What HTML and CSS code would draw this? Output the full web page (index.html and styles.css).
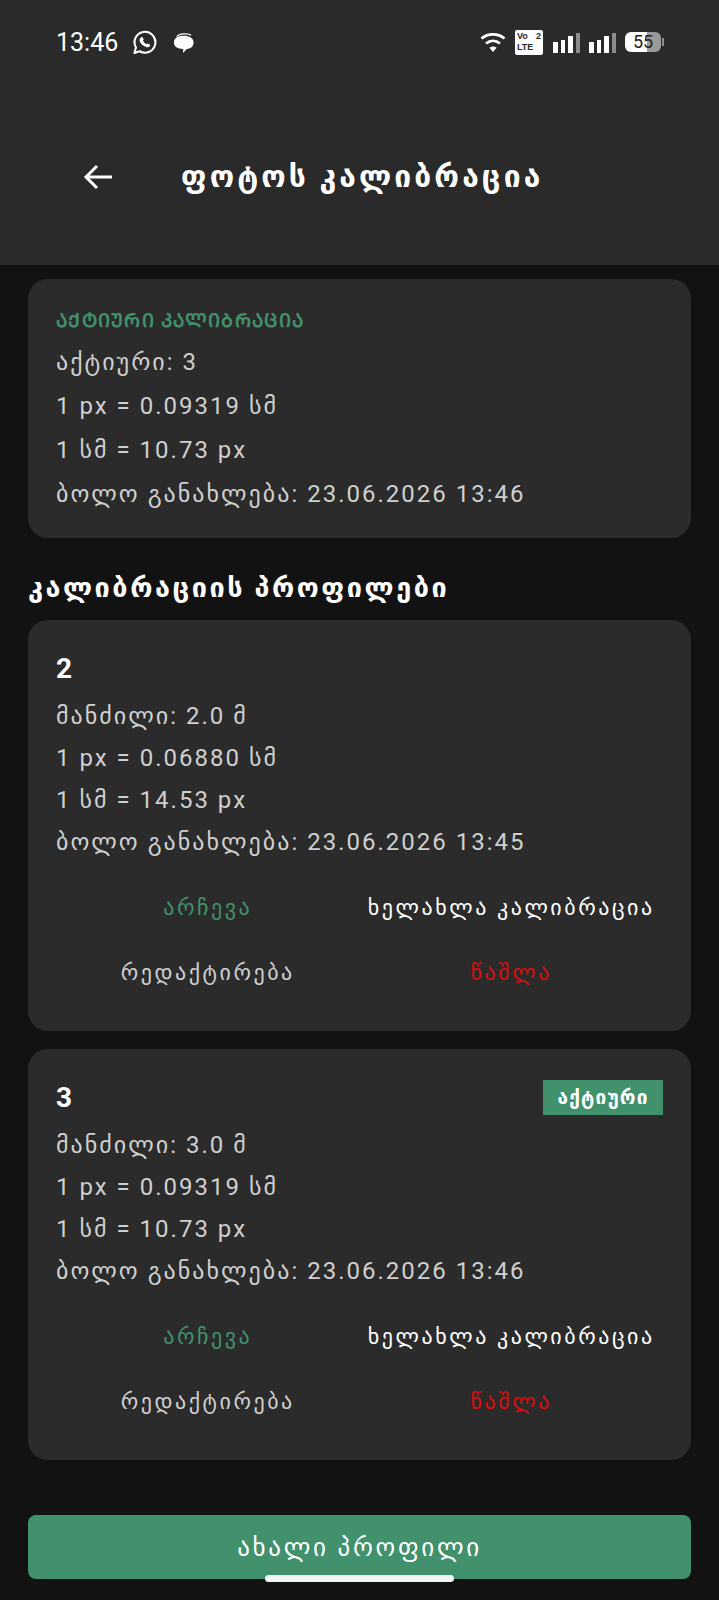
FILE: index.html
```html
<!DOCTYPE html>
<html>
<head>
    <title>ფოტოს კალიბრაცია</title>
    <link rel="stylesheet" href="styles.css">
</head>
<body>
    <header class="app-header">
        <div class="status-bar">
            <span class="time">13:46</span>
            <svg class="icon-whatsapp" viewBox="0 0 24 24" fill="none" stroke="#fff" stroke-width="2">
                <path d="M2.300 22 3.800 16.800A10 10 0 1 1 7.400 20.400Z" stroke-linejoin="round"/>
                <path d="M8.600 7.200c.8-.8 1.600-.5 2 .4l.5 1.200c.1.4 0 .8-.6 1.500.8 1.500 2 2.700 3.500 3.400.7-.7 1.100-.8 1.500-.6l1.200.6c.8.4 1 1.200.3 2-1.200 1.300-3 1-5.400-.4-2.300-1.400-3.800-3.300-4.300-5.100-.2-1.100.3-2.100 1.300-3Z" fill="#fff" stroke="none"/>
            </svg>
            <svg class="icon-chat" viewBox="0 0 24 24">
                <path d="M5 6C7 2.500 17 2 20 4.500" fill="none" stroke="#fff" stroke-width="1.300"/>
                <path d="M12 5c6 0 10.500 2.500 10.500 7s-3.500 6.500-7 6.800L11.500 23l.2-4.200C6 18.500 2 16.500 2 12s4-7 10-7Z" fill="#fff"/>
            </svg>
            <div class="status-right">
                <svg class="icon-wifi" viewBox="0 0 26 20" fill="none" stroke="#fff" stroke-width="2.800">
                    <path d="M1.500 6.500C8 1 18 1 24.500 6.500"/>
                    <path d="M6 11.500c4.200-3.500 9.800-3.500 14 0"/>
                    <path d="M13 20l-3.600-4.200c2-1.600 5.200-1.600 7.200 0Z" fill="#fff" stroke="none"/>
                </svg>
                <div class="volte">
                    <span class="volte-row"><span>Vo</span><span>2</span></span>
                    <span class="volte-row">LTE</span>
                </div>
                <div class="signal">
                    <i class="bar bar-1"></i><i class="bar bar-2"></i><i class="bar bar-3"></i><i class="bar bar-4"></i>
                </div>
                <div class="signal">
                    <i class="bar bar-1"></i><i class="bar bar-2"></i><i class="bar bar-3"></i><i class="bar bar-4"></i>
                </div>
                <div class="battery"><span class="battery-level">55</span><i class="battery-cap"></i></div>
            </div>
        </div>
        <div class="toolbar">
            <svg class="icon-back" viewBox="0 0 30 26" fill="none" stroke="#fff" stroke-width="3">
                <path d="M29 13H3"/>
                <path d="M14 2 3 13l11 11"/>
            </svg>
            <h1>ფოტოს კალიბრაცია</h1>
        </div>
    </header>

    <main class="content">
        <section class="card card-active">
            <div class="active-title">ᲐᲥᲢᲘᲣᲠᲘ ᲙᲐᲚᲘᲑᲠᲐᲪᲘᲐ</div>
            <div class="line">აქტიური: 3</div>
            <div class="line">1 px = 0.09319 სმ</div>
            <div class="line">1 სმ = 10.73 px</div>
            <div class="line">ბოლო განახლება: 23.06.2026 13:46</div>
        </section>

        <h2>კალიბრაციის პროფილები</h2>

        <section class="card profile">
            <div class="profile-head">
                <span class="profile-name">2</span>
            </div>
            <div class="line">მანძილი: 2.0 მ</div>
            <div class="line">1 px = 0.06880 სმ</div>
            <div class="line">1 სმ = 14.53 px</div>
            <div class="line">ბოლო განახლება: 23.06.2026 13:45</div>
            <div class="actions">
                <span class="action action-select">არჩევა</span>
                <span class="action action-white">ხელახლა კალიბრაცია</span>
                <span class="action">რედაქტირება</span>
                <span class="action action-delete">წაშლა</span>
            </div>
        </section>

        <section class="card profile">
            <div class="profile-head">
                <span class="profile-name">3</span>
                <span class="badge">აქტიური</span>
            </div>
            <div class="line">მანძილი: 3.0 მ</div>
            <div class="line">1 px = 0.09319 სმ</div>
            <div class="line">1 სმ = 10.73 px</div>
            <div class="line">ბოლო განახლება: 23.06.2026 13:46</div>
            <div class="actions">
                <span class="action action-select">არჩევა</span>
                <span class="action action-white">ხელახლა კალიბრაცია</span>
                <span class="action">რედაქტირება</span>
                <span class="action action-delete">წაშლა</span>
            </div>
        </section>

        <button class="new-profile">ახალი პროფილი</button>
    </main>

    <div class="home-indicator"></div>
</body>
</html>
```

FILE: styles.css
```css
* {
    box-sizing: border-box;
}
html, body {
    height: 1600px;
    overflow: hidden;
}
body {
    font-family: Roboto, "DejaVu Sans", sans-serif;
    background-color: #121212;
    color: #cfcfcf;
    margin: 0;
    padding: 0;
    position: relative;
}

/* header */
.app-header {
    background-color: #2a2a2a;
    height: 265px;
    padding: 29px 56px 0;
}
.status-bar {
    display: flex;
    align-items: center;
    height: 26px;
    color: #fff;
}
.time {
    font-size: 25px;
    width: 63px;
    margin-right: 13px;
}
.icon-whatsapp {
    width: 25px;
    height: 25px;
    margin-right: 15px;
}
.icon-chat {
    width: 23px;
    height: 23px;
}
.status-right {
    display: flex;
    align-items: center;
    margin-left: auto;
}
.icon-wifi {
    width: 26px;
    height: 20px;
    margin-right: 9px;
}
.volte {
    width: 28px;
    height: 25px;
    background-color: #fff;
    border-radius: 2px;
    color: #2a2a2a;
    font-family: "Liberation Sans", sans-serif;
    font-size: 9px;
    font-weight: bold;
    line-height: 11px;
    padding: 1px 2px;
    margin-right: 10px;
}
.volte-row {
    display: flex;
    justify-content: space-between;
}
.signal {
    display: flex;
    align-items: flex-end;
    gap: 3px;
    height: 21px;
    margin-right: 9px;
}
.bar {
    display: block;
    width: 4.500px;
    background-color: #fff;
}
.bar-1 { height: 11px; }
.bar-2 { height: 13px; }
.bar-3 { height: 17px; }
.bar-4 { height: 20px; background-color: #8c8c8c; }
.battery {
    position: relative;
    display: flex;
    align-items: center;
    width: 36px;
    height: 20px;
    border-radius: 6px;
    margin-right: 2px;
    background: linear-gradient(to right, #fff 60%, #9a9a9a 60%);
}
.battery-level {
    width: 100%;
    text-align: center;
    color: #222;
    font-size: 18px;
    line-height: 20px;
}
.battery-cap {
    position: absolute;
    right: -3px;
    top: 6px;
    width: 2px;
    height: 8px;
    background-color: #8c8c8c;
}
.toolbar {
    display: flex;
    align-items: center;
    margin-top: 104px;
    padding-left: 27px;
}
.icon-back {
    width: 30px;
    height: 26px;
    margin-right: 68px;
}
h1 {
    margin: 0;
    font-size: 30px;
    letter-spacing: 3.100px;
    font-weight: bold;
    color: #fff;
}

/* content */
.content {
    padding: 14px 28px 0;
}
.card {
    background-color: #2b2b2b;
    border-radius: 20px;
    padding: 21px 28px 0;
}
.card-active {
    height: 259px;
    padding-top: 23px;
}
.active-title {
    color: #41916c;
    font-size: 19px;
    letter-spacing: 1.300px;
    font-weight: bold;
    line-height: 38px;
}
.card-active .line {
    line-height: 44px;
}
.line {
    font-size: 24px;
    letter-spacing: 2px;
    line-height: 42px;
    white-space: nowrap;
}
h2 {
    margin: 30px 0 12px;
    font-size: 27px;
    letter-spacing: 2.550px;
    line-height: 40px;
    font-weight: bold;
    color: #fff;
}
.profile {
    height: 411px;
    margin-bottom: 18px;
}
.profile-head {
    display: flex;
    justify-content: space-between;
    align-items: center;
    height: 54px;
}
.profile-name {
    font-size: 28px;
    font-weight: bold;
    color: #fff;
}
.badge {
    background-color: #41916c;
    color: #fff;
    font-size: 19px;
    letter-spacing: 1.200px;
    font-weight: bold;
    width: 120px;
    height: 35px;
    line-height: 35px;
    text-align: center;
}
.actions {
    display: grid;
    grid-template-columns: 1fr 1fr;
    grid-auto-rows: 65px;
    margin-top: 12px;
}
.action {
    display: flex;
    align-items: center;
    justify-content: center;
    font-size: 22px;
    letter-spacing: 2.550px;
    white-space: nowrap;
}
.action-select {
    color: #41916c;
}
.action-white {
    color: #fff;
}
.action-delete {
    color: #d90d0d;
}
.new-profile {
    display: block;
    width: 100%;
    height: 64px;
    margin-top: 55px;
    border: none;
    border-radius: 8px;
    background-color: #41916c;
    color: #fff;
    font-family: inherit;
    font-size: 25px;
    letter-spacing: 2.700px;
}
.home-indicator {
    position: absolute;
    left: 265px;
    top: 1575px;
    width: 189px;
    height: 7px;
    border-radius: 4px;
    background-color: #f1f5f3;
}
```
